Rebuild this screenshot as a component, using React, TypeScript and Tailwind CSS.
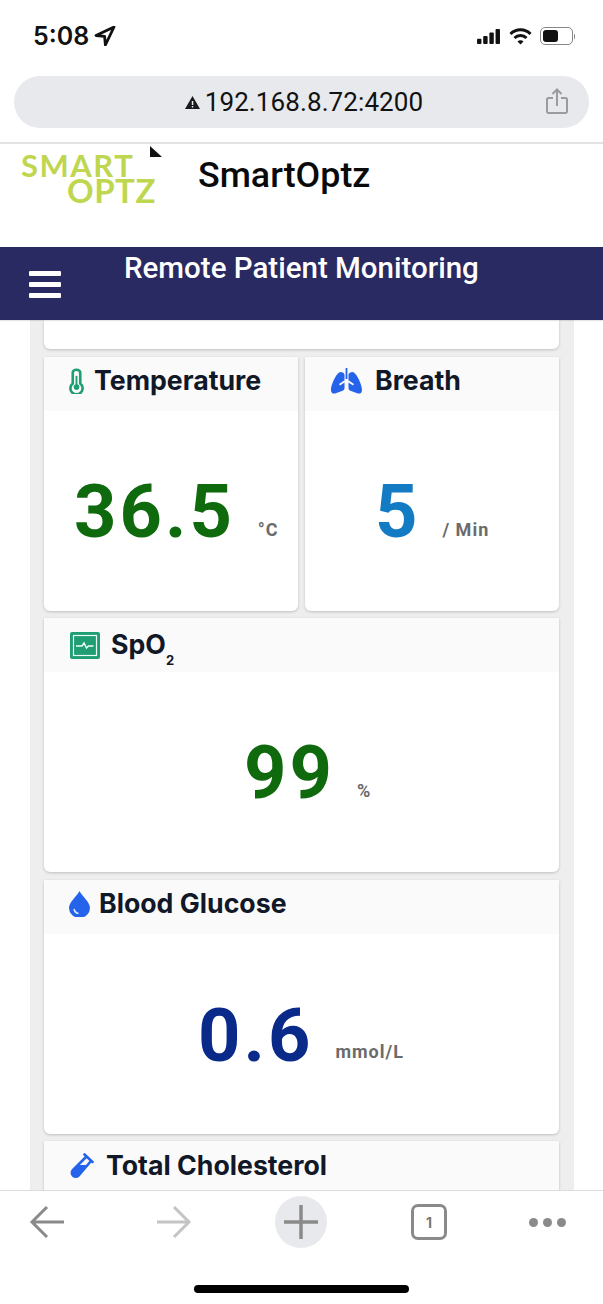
import React from "react";

const inter = "font-['Inter','Liberation_Sans',sans-serif]";
const roboto = "font-['Roboto','Liberation_Sans',sans-serif]";

function Card({ title, icon, value, unit, color, valueClass, unitClass, titleClass, className }: any) {
  return (
    <div className={`bg-white rounded-b-md shadow-[0_1px_3px_rgba(0,0,0,0.2)] flex flex-col ${className}`}>
      <div className={`h-[54px] bg-[#fafafb] flex items-center shrink-0 ${titleClass}`}>
        {icon}
        <span className={`${inter} text-[26.7px] font-bold text-[#111827] leading-none`}>{title}</span>
      </div>
      <div className={`flex-1 flex justify-start items-start ${valueClass}`}>
        <span className={`${roboto} text-[74px] leading-none font-bold tracking-[3px] ${color}`}>{value}</span>
        <span className={`${roboto} text-[18px] font-bold text-[#6b6b6b] tracking-[1px] leading-none ${unitClass}`}>{unit}</span>
      </div>
    </div>
  );
}

export default function App() {
  return (
    <div className="w-[603px] h-[1304px] overflow-hidden bg-white flex flex-col font-['Inter',sans-serif]">
      {/* status bar */}
      <div className="h-[76px] shrink-0 flex items-start justify-between pl-[33px] pr-[28px] pt-[22px]">
        <div className="flex items-center gap-[5px]">
          <span className={`${inter} text-[25px] font-semibold leading-[28px] text-[#111]`}>5:08</span>
          <svg width="22" height="20" viewBox="0 0 20 20"><path d="M19 1 1 9.500l8.600.8.8 8.700z" fill="none" stroke="#111" strokeWidth="2.800" strokeLinejoin="round" /></svg>
        </div>
        <div className="flex items-center gap-[7px] pt-[5px]">
          <svg width="27" height="15" viewBox="0 0 26 17" fill="#111">
            <rect x="0" y="11" width="5" height="6" rx="1" /><rect x="7" y="8" width="5" height="9" rx="1" /><rect x="14" y="4" width="5" height="13" rx="1" /><rect x="21" y="0" width="5" height="17" rx="1" />
          </svg>
          <svg width="23" height="17" viewBox="0 0 23 17" fill="none" stroke="#111" strokeWidth="3">
            <path d="M1.500 6a14 14 0 0 1 20 0" /><path d="M5.500 10a8.500 8.500 0 0 1 12 0" /><path d="M11.500 16.500 8.500 13.500a4.200 4.200 0 0 1 6 0z" fill="#111" stroke="none" />
          </svg>
          <div className="flex items-center ml-[1px]">
            <div className="w-[33px] h-[18px] rounded-[5px] border border-[#888] p-[2px]">
              <div className="w-[15px] h-full bg-[#111] rounded-[3px]" />
            </div>
            <div className="w-[1.5px] h-[5px] bg-[#888] ml-[1px] rounded-r" />
          </div>
        </div>
      </div>

      {/* address bar */}
      <div className="h-[52px] mx-[14px] shrink-0 rounded-[26px] bg-[#e8e9ec] relative flex items-center justify-center">
        <div className="flex items-center gap-[5px] ml-[5px]">
          <svg width="15" height="13" viewBox="0 0 15 13"><path d="M7.500 0 15 13H0z" fill="#1a1a1a" /><rect x="6.800" y="5" width="1.500" height="4" fill="#e8e9ec" /><rect x="6.800" y="10" width="1.500" height="1.500" fill="#e8e9ec" /></svg>
          <span className="font-['Roboto',sans-serif] text-[26px] leading-none text-[#111] tracking-[0.1px]">192.168.8.72:4200</span>
        </div>
        <svg className="absolute right-[21px] top-[12px]" width="22" height="27" viewBox="0 0 22 27" fill="none" stroke="#9a9a9f" strokeWidth="2">
          <path d="M7 10H2.500a1.500 1.500 0 0 0-1.500 1.500v12A1.500 1.500 0 0 0 2.500 25h17a1.500 1.500 0 0 0 1.500-1.500v-12A1.500 1.500 0 0 0 19.500 10H15" />
          <path d="M11 18V2M6.500 6 11 1.500 15.500 6" />
        </svg>
      </div>

      <div className="h-[14px] shrink-0" />
      <div className="h-[2px] bg-[#e2e2e2] shrink-0" />

      {/* logo header */}
      <div className="h-[103px] shrink-0 flex items-start relative">
        <div className="ml-[21px] mt-[9px] w-[135px] text-[#bfd650] font-['Lato',sans-serif] font-bold leading-[25px]">
          <div className="text-[31px] tracking-[1.5px]">SMART</div>
          <div className="text-[33px] tracking-[0.5px] pl-[46px]">OPTZ</div>
        </div>
        <svg className="absolute left-[149px] top-[1px]" width="14" height="13" viewBox="0 0 14 13"><path d="M1 1v11h12z" fill="#111" /></svg>
        <span className="ml-[42px] mt-[12px] font-['Roboto',sans-serif] font-medium text-[35.800px] leading-[38px] text-[#0a0a0a]">SmartOptz</span>
      </div>

      {/* navy bar */}
      <div className="h-[73px] shrink-0 bg-[#2a2a62] relative z-10 flex items-start shadow-[0_1px_1px_rgba(0,0,0,0.1)]">
        <div className="ml-[29px] mt-[24px] w-[32px] flex flex-col gap-[6px]">
          <div className="h-[5px] bg-white rounded-[1px]" />
          <div className="h-[5px] bg-white rounded-[1px]" />
          <div className="h-[5px] bg-white rounded-[1px]" />
        </div>
        <span className="ml-[63px] mt-[4px] font-['Roboto',sans-serif] font-medium text-[29.500px] leading-[34px] text-white">Remote Patient Monitoring</span>
      </div>

      {/* content */}
      <div className="flex-1 min-h-0 overflow-hidden">
        <div className="mx-[30px] w-[544px] bg-[#eeeeef] px-[14px] pb-[20px] flex flex-col gap-[7.5px]">
          <div className="h-[29px] bg-white rounded-b-md shadow-[0_1px_3px_rgba(0,0,0,0.2)] w-[515px]" />
          <div className="w-[515px] flex gap-[7px]">
            <Card
              className="w-[254px] h-[254px]"
              title="Temperature"
              titleClass="pl-[25px] gap-[10px] pb-[6px]"
              icon={
                <svg width="15" height="26" viewBox="0 0 16 25" fill="none">
                  <path d="M4 3.500a4 3 0 0 1 8 0v11.700a6.500 6.500 0 1 1-8 0z" stroke="#1f9d73" strokeWidth="2.800" />
                  <circle cx="8" cy="19" r="3" fill="#1f9d73" /><rect x="7" y="7" width="2" height="11" fill="#1f9d73" />
                </svg>
              }
              value="36.5"
              unit="°C"
              color="text-[#0f6a0d]"
              valueClass="pt-[64px] pl-[30px]"
              unitClass="mt-[46px] ml-[23px]"
            />
            <Card
              className="w-[254px] h-[254px]"
              title="Breath"
              titleClass="pl-[26px] gap-[13px] pb-[6px]"
              icon={
                <svg width="31" height="26" viewBox="0 0 31 26">
                  <rect x="14.600" y="0" width="1.800" height="11" fill="#2563eb" />
                  <path d="M9.500 4C6 4 0 16 0 22c0 3 2 4 4 3.500l7-2.500c1.500-.5 2.500-1.500 2.500-3V14.500L9 17.500 8 16l5.500-3.700V7c0-2-2-3-4-3z" fill="#2563eb" />
                  <path d="M21.500 4C25 4 31 16 31 22c0 3-2 4-4 3.500l-7-2.500c-1.500-.5-2.500-1.500-2.500-3V14.500l4.500 3 1-1.500-5.500-3.700V7c0-2 2-3 4-3z" fill="#2563eb" />
                </svg>
              }
              value="5"
              unit="/ Min"
              color="text-[#137bc4]"
              valueClass="pt-[64px] pl-[70px]"
              unitClass="mt-[46px] ml-[22px]"
            />
          </div>
          <Card
            className="w-[515px] h-[254px]"
            title={<>SpO<sub className="text-[13px] font-bold align-[-8px] leading-none">2</sub></>}
            titleClass="pl-[26px] gap-[11px] pt-[4px]"
            icon={
              <svg className="-mt-[4px]" width="30" height="27" viewBox="0 0 30 27" fill="none">
                <rect x="0" y="0" width="30" height="27" rx="2" fill="#1f9d73" />
                <rect x="3.500" y="3.500" width="23" height="20" stroke="#eafff6" strokeWidth="1.200" />
                <path d="M6 14h6l2-3 2.500 5 2-2h5" stroke="#eafff6" strokeWidth="1.500" />
              </svg>
            }
            value="99"
            unit="%"
            color="text-[#0f6a0d]"
            valueClass="pt-[64px] pl-[200px]"
            unitClass="mt-[46px] ml-[22px] text-[15px]"
          />
          <Card
            className="w-[515px] h-[254px]"
            title="Blood Glucose"
            titleClass="pl-[25px] gap-[9px] pb-[6px]"
            icon={
              <svg width="21" height="26" viewBox="0 0 21 26">
                <path d="M10.500 0C8 5 0 11 0 17a10 9.500 0 0 0 21 0C21 11 13 5 10.500 0z" fill="#2563eb" />
                <path d="M5 18c.5 2.500 2 4 4.500 4.500" stroke="#dbeafe" strokeWidth="1.500" fill="none" />
              </svg>
            }
            value="0.6"
            unit="mmol/L"
            color="text-[#0a2a8a]"
            valueClass="pt-[65px] pl-[154px]"
            unitClass="mt-[44px] ml-[22px]"
          />
          <Card
            className="w-[515px] h-[254px]"
            title="Total Cholesterol"
            titleClass="pl-[25px] gap-[12px] pb-[6px]"
            icon={
              <svg width="25" height="25" viewBox="0 0 25 25" fill="none">
                <path d="M15.500 1.500 23.500 9M17.500 3.500 4 17a3.800 3.800 0 0 0 5.500 5.500L22 8" stroke="#2563eb" strokeWidth="2.600" strokeLinecap="round" />
                <path d="M9.500 12H19L9.500 22.500a3.800 3.800 0 0 1-5.500-5.500z" fill="#2563eb" />
              </svg>
            }
            value=""
            unit=""
            color=""
            valueClass=""
            unitClass=""
          />
        </div>
      </div>

      {/* bottom toolbar */}
      <div className="h-[114px] shrink-0 bg-white border-t border-[#dcdcdc] relative z-10 flex flex-col">
        <div className="flex items-start pl-[29px] pr-[37px] pt-[5px]">
          <svg className="mt-[9px]" width="36" height="34" viewBox="0 0 36 34" fill="none" stroke="#8a8a8a" strokeWidth="3"><path d="M35 17H3M18 2 3 17l15 15" /></svg>
          <svg className="mt-[9px] ml-[91px]" width="36" height="34" viewBox="0 0 36 34" fill="none" stroke="#c4c4c4" strokeWidth="3"><path d="M1 17h32M18 2l15 15-15 15" /></svg>
          <div className="ml-[83px] w-[52px] h-[52px] rounded-full bg-[#e8e9ec] flex items-center justify-center">
            <svg width="34" height="34" viewBox="0 0 34 34" stroke="#8a8a8a" strokeWidth="3.500"><path d="M17 0v34M0 17h34" /></svg>
          </div>
          <div className="ml-[84px] mt-[8px] w-[36px] h-[36px] border-[3px] border-[#8a8a8a] rounded-[7px] flex items-center justify-center">
            <span className={`${inter} text-[14px] font-bold text-[#777]`}>1</span>
          </div>
          <div className="ml-auto mt-[22px] flex gap-[5px]">
            <div className="w-[9px] h-[9px] rounded-full bg-[#8a8a8a]" />
            <div className="w-[9px] h-[9px] rounded-full bg-[#8a8a8a]" />
            <div className="w-[9px] h-[9px] rounded-full bg-[#8a8a8a]" />
          </div>
        </div>
        <div className="mt-[37px] ml-[194px] w-[215px] h-[8px] rounded-full bg-black" />
      </div>
    </div>
  );
}
